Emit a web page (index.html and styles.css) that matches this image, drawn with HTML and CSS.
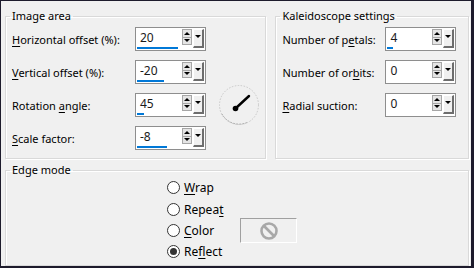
FILE: index.html
```html
<!DOCTYPE html>
<html lang="en">
<head>
    <meta charset="UTF-8">
    <title>Kaleidoscope</title>
    <link rel="stylesheet" href="styles.css">
</head>
<body>
    <div class="top">
        <fieldset class="group image-area">
            <legend>Image area</legend>
            <div class="rows">
                <div class="row">
                    <span class="lbl"><u>H</u>orizontal offset (%):</span>
                    <div class="spin">
                        <div class="val"><span>20</span><i class="bar" style="width: 41px"></i></div>
                        <div class="arrows"><b class="up"></b><b class="down"></b></div>
                        <div class="drop"></div>
                    </div>
                </div>
                <div class="row">
                    <span class="lbl"><u>V</u>ertical offset (%):</span>
                    <div class="spin">
                        <div class="val"><span>-20</span><i class="bar" style="width: 27px"></i></div>
                        <div class="arrows"><b class="up"></b><b class="down"></b></div>
                        <div class="drop"></div>
                    </div>
                </div>
                <div class="row">
                    <span class="lbl">Rotation <u>a</u>ngle:</span>
                    <div class="spin">
                        <div class="val"><span>45</span><i class="bar" style="width: 7px"></i></div>
                        <div class="arrows"><b class="up"></b><b class="down"></b></div>
                        <div class="drop"></div>
                    </div>
                    <div class="dial">
                        <svg width="42" height="42" viewBox="0 0 42 42">
                            <circle cx="21" cy="21" r="19.5" fill="none" stroke="#c8c8c8" stroke-dasharray="1.5 1.5"/>
                            <path d="M4 30 A19.5 19.5 0 0 0 30 38" fill="none" stroke="#a0a0a0" stroke-dasharray="1.5 1.5"/>
                            <line x1="18" y1="24" x2="31" y2="12" stroke="#000" stroke-width="2.4" stroke-linecap="round"/>
                            <circle cx="17.5" cy="24.5" r="2.8" fill="#000"/>
                        </svg>
                    </div>
                </div>
                <div class="row">
                    <span class="lbl"><u>S</u>cale factor:</span>
                    <div class="spin">
                        <div class="val"><span>-8</span><i class="bar" style="width: 30px"></i></div>
                        <div class="arrows"><b class="up"></b><b class="down"></b></div>
                        <div class="drop"></div>
                    </div>
                </div>
            </div>
        </fieldset>
        <fieldset class="group kaleido">
            <legend>Kaleidoscope settings</legend>
            <div class="rows">
                <div class="row">
                    <span class="lbl">Number of p<u>e</u>tals:</span>
                    <div class="spin">
                        <div class="val"><span>4</span><i class="bar" style="width: 6px"></i></div>
                        <div class="arrows"><b class="up"></b><b class="down"></b></div>
                        <div class="drop"></div>
                    </div>
                </div>
                <div class="row">
                    <span class="lbl">Number of or<u>b</u>its:</span>
                    <div class="spin">
                        <div class="val"><span>0</span><i class="bar" style="width: 0px"></i></div>
                        <div class="arrows"><b class="up"></b><b class="down"></b></div>
                        <div class="drop"></div>
                    </div>
                </div>
                <div class="row">
                    <span class="lbl"><u>R</u>adial suction:</span>
                    <div class="spin">
                        <div class="val"><span>0</span><i class="bar" style="width: 0px"></i></div>
                        <div class="arrows"><b class="up"></b><b class="down"></b></div>
                        <div class="drop"></div>
                    </div>
                </div>
            </div>
        </fieldset>
    </div>
    <fieldset class="group edge">
        <legend>Edge mode</legend>
        <div class="modes">
            <label class="radio"><span class="dot"></span><span><u>W</u>rap</span></label>
            <label class="radio r2"><span class="dot"></span><span>Repea<u>t</u></span></label>
            <label class="radio r3"><span class="dot"></span><span><u>C</u>olor</span></label>
            <button class="swatch" disabled>
                <svg width="20" height="20" viewBox="0 0 20 20">
                    <circle cx="10" cy="10" r="7.5" fill="none" stroke="#a8a8a8" stroke-width="2.6"/>
                    <line x1="5" y1="5" x2="15" y2="15" stroke="#a8a8a8" stroke-width="2.6"/>
                </svg>
            </button>
            <label class="radio r4"><span class="dot on"></span><span>Re<u>f</u>lect</span></label>
        </div>
    </fieldset>
</body>
</html>
```

FILE: styles.css
```css
*{
    box-sizing: border-box;
}

body{
    margin: 0;
    width: 474px;
    height: 268px;
    background: #f0f0f0;
    border-style: solid;
    border-color: #1d1b2c;
    border-width: 1px 3px 2px 1px;
    padding: 7px 2px 0 4px;
    display: flex;
    flex-direction: column;
    font-family: "Noto Sans", "Open Sans", sans-serif;
    font-size: 11px;
    color: #000;
}

u{
    text-decoration-thickness: 1px;
    text-underline-offset: 2px;
}

.top{
    display: flex;
    gap: 9px;
}

.group{
    margin: 0;
    border: 1px solid #d9d9d9;
    box-shadow: inset 1px 1px 0 #fff, 1px 1px 0 #fff;
    padding: 3px 4px 0 4px;
    min-width: 0;
}

.group legend{
    padding: 0 2px;
    line-height: 16px;
    height: 16px;
}

.image-area{
    width: 262px;
    height: 151px;
}

.kaleido{
    width: 194px;
    height: 151px;
}

.rows{
    display: flex;
    flex-direction: column;
    gap: 9px;
    padding-left: 2px;
}

.row{
    display: flex;
    align-items: center;
    height: 24px;
}

.image-area .lbl{
    width: 123px;
}

.kaleido .lbl{
    width: 103px;
}

.spin{
    width: 71px;
    height: 24px;
    border: 1px solid #8e8e8e;
    background: #fff;
    display: flex;
    padding: 0 1px 0 0;
}

.val{
    flex: 1;
    display: flex;
    flex-direction: column;
    padding: 0 0 1px 1px;
}

.val span{
    padding-left: 3px;
    line-height: 19px;
    height: 19px;
    font-size: 12px;
    color: #1a1a1a;
}

.bar{
    display: block;
    height: 3px;
    background: #0078d7;
}

.arrows{
    width: 10px;
    height: 16px;
    margin-top: 1px;
    border: 1px solid #a6a6a6;
    background: #e4e4e4;
    display: flex;
    flex-direction: column;
}

.arrows b{
    flex: 1;
    display: flex;
    justify-content: center;
    align-items: center;
}

.arrows .up{
    border-bottom: 1px solid #a6a6a6;
}

.arrows .up::after{
    content: "";
    border: 3px solid transparent;
    border-bottom: 3px solid #000;
    border-top: 0;
}

.arrows .down::after{
    content: "";
    border: 3px solid transparent;
    border-top: 3px solid #000;
    border-bottom: 0;
}

.drop{
    width: 11px;
    height: 19px;
    margin: 1px 0 0 1px;
    background: #f0f0f0;
    border-style: solid;
    border-width: 1px 2px 2px 1px;
    border-color: #fff #6d6d6d #6d6d6d #fff;
    display: flex;
    justify-content: center;
    padding-top: 5px;
}

.drop::after{
    content: "";
    width: 0;
    height: 0;
    border: 3px solid transparent;
    border-top: 3px solid #000;
    border-bottom: 0;
}

.dial{
    width: 42px;
    height: 24px;
    margin-left: 12px;
    display: flex;
    align-items: center;
}

.dial svg{
    display: block;
    margin: -9px 0;
    flex: none;
}

.edge{
    margin-top: 3px;
    width: 464px;
    flex: 1;
    padding-top: 0;
}

.modes{
    display: grid;
    grid-template-columns: 73px 57px;
    grid-template-rows: 22px 22px 21px 21px;
    margin: -2px 0 0 157px;
}

.radio{
    display: flex;
    align-items: center;
    gap: 4px;
    grid-column: 1;
    font-size: 12px;
}

.r2{ grid-row: 2; }
.r3{ grid-row: 3; }
.r4{ grid-row: 4; }

.dot{
    width: 13px;
    height: 13px;
    border: 1px solid #333;
    border-radius: 50%;
    background: #fff;
    display: flex;
    justify-content: center;
    align-items: center;
}

.dot.on::after{
    content: "";
    width: 7px;
    height: 7px;
    border-radius: 50%;
    background: #333;
}

.swatch{
    grid-column: 2;
    grid-row: 3;
    align-self: center;
    width: 57px;
    height: 25px;
    margin: -2px 0;
    padding: 0;
    background: #f0f0f0;
    border-style: solid;
    border-width: 1px;
    border-color: #a0a0a0 #fff #fff #a0a0a0;
    display: flex;
    justify-content: center;
    align-items: center;
}
```
